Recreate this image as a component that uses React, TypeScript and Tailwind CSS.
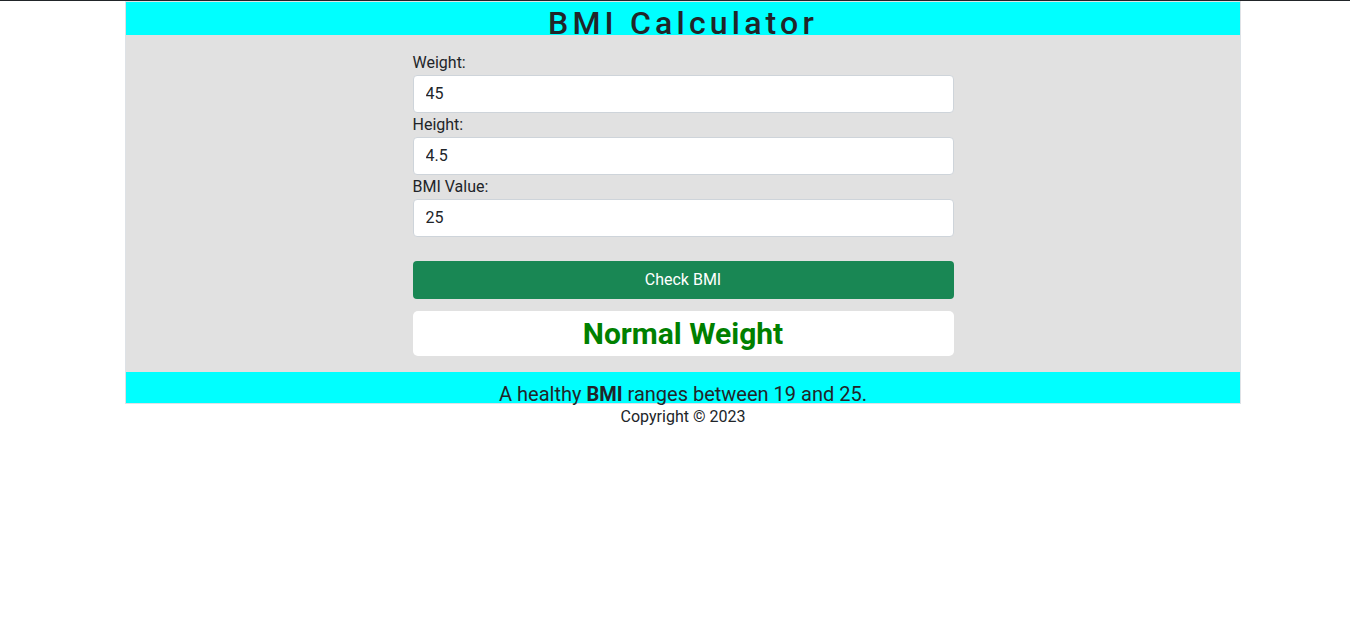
export default function App() {
  const fields = [
    { label: "Weight:", value: "45" },
    { label: "Height:", value: "4.5" },
    { label: "BMI Value:", value: "25" },
  ];

  return (
    <div className="min-h-[637px] bg-white text-[#212529] font-['Roboto',sans-serif] border-t border-[#212529]">
      <div className="ml-[125px] w-[1116px] border border-[#dee2e6]">
        {/* Header */}
        <div className="h-[33px] bg-[#00ffff] text-center">
          <h1 className="text-[32px] leading-[42px] font-medium tracking-[4.2px]">BMI Calculator</h1>
        </div>

        {/* Form */}
        <div className="bg-[#e1e1e1] pt-4 pb-4">
          <div className="w-[541px] mx-auto">
            {fields.map((f) => (
              <div key={f.label}>
                <label className="block text-base leading-6">{f.label}</label>
                <input
                  type="text"
                  defaultValue={f.value}
                  className="block w-full h-[38px] px-3 pb-px text-base bg-white border border-[#ced4da] rounded-[4px] outline-none"
                />
              </div>
            ))}
            <button className="mt-6 w-full h-[38px] bg-[#198754] text-white text-base rounded-[4px]">
              Check BMI
            </button>
            <div className="mt-3 h-[45px] bg-white rounded-[5px] flex items-center justify-center">
              <h3 className="text-[30px] font-bold text-[#008000] leading-none">Normal Weight</h3>
            </div>
          </div>
        </div>

        {/* Footer band */}
        <div className="h-[31px] bg-[#00ffff] text-center">
          <p className="pt-[7px] text-xl leading-[30px]">
            A healthy <b>BMI</b> ranges between 19 and 25.
          </p>
        </div>
      </div>
      <p className="text-center text-base leading-6 ml-[16px] mt-px">Copyright © 2023</p>
    </div>
  );
}
